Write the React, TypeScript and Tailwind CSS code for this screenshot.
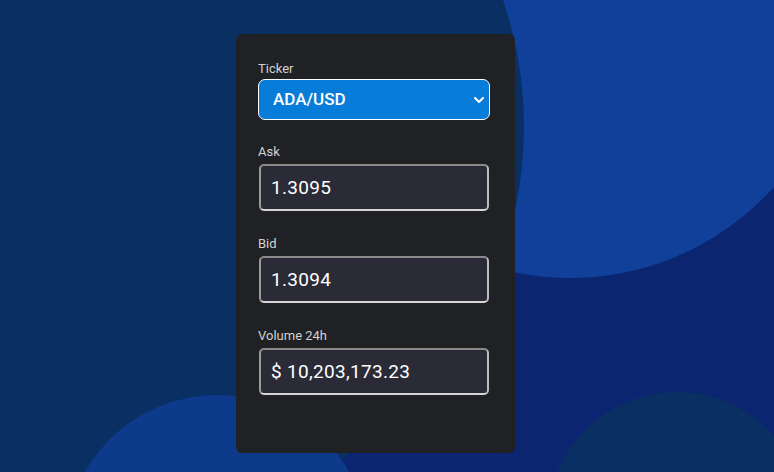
import { useState } from 'react';

const fields = [
  { label: 'Ask', value: '1.3095' },
  { label: 'Bid', value: '1.3094' },
  { label: 'Volume 24h', value: '$ 10,203,173.23' }
];

const Backdrop = () => (
  <svg className="absolute inset-0" width="774" height="472" viewBox="0 0 774 472">
    <rect width="774" height="472" fill="#0b2570" />
    <circle cx="570" cy="4" r="274" fill="#10409a" />
    <circle cx="130" cy="127" r="394" fill="#0a2f63" />
    <circle cx="217" cy="547" r="152" fill="#0d3a8a" />
    <circle cx="677" cy="522" r="130" fill="#0a2f63" />
  </svg>
);

const App = () => {
  const [ticker, setTicker] = useState('ADA/USD');

  return (
    <div className="relative h-screen w-full overflow-hidden bg-[#0b2570] font-['Roboto',sans-serif]">
      <Backdrop />
      <div className="relative pl-[236px] pt-[34px]">
        <div className="h-[419px] w-[279px] rounded-md bg-[#202124] px-[22px] pt-[27px]">
          <label className="block text-[13px] leading-4 text-[#d2d2d2]">Ticker</label>
          <div className="relative mt-[2px] h-[41px] w-[232px]">
            <select
              value={ticker}
              onChange={e => setTicker(e.target.value)}
              className="h-full w-full appearance-none rounded-[7px] border border-white bg-[#077cd9] pl-[14px] text-[17px] font-medium text-white outline-none"
            >
              <option>ADA/USD</option>
              <option>BTC/USD</option>
              <option>ETH/USD</option>
            </select>
            <svg
              className="pointer-events-none absolute right-[6px] top-[18px]"
              width="10"
              height="6"
              viewBox="0 0 10 6"
              fill="none"
              stroke="white"
              strokeWidth="2"
              strokeLinecap="round"
              strokeLinejoin="round"
            >
              <path d="M1 1l4 4 4-4" />
            </svg>
          </div>

          {fields.map((f, i) => (
            <div key={f.label} className={i === 0 ? 'mt-6' : 'mt-[25px]'}>
              <label className="block text-[13px] leading-4 text-[#d2d2d2]">{f.label}</label>
              <input
                readOnly
                value={f.value}
                className="ml-px mt-1 h-[47px] w-[230px] rounded-[5px] border-2 border-t-[#8a8a8a] border-l-[#9a9a9a] border-r-[#bdbdbd] border-b-[#d6d6d6] bg-[#2a2b36] pl-[10px] text-[19px] tracking-[0.3px] text-white outline-none"
              />
            </div>
          ))}
        </div>
      </div>
    </div>
  );
};

export default App;
